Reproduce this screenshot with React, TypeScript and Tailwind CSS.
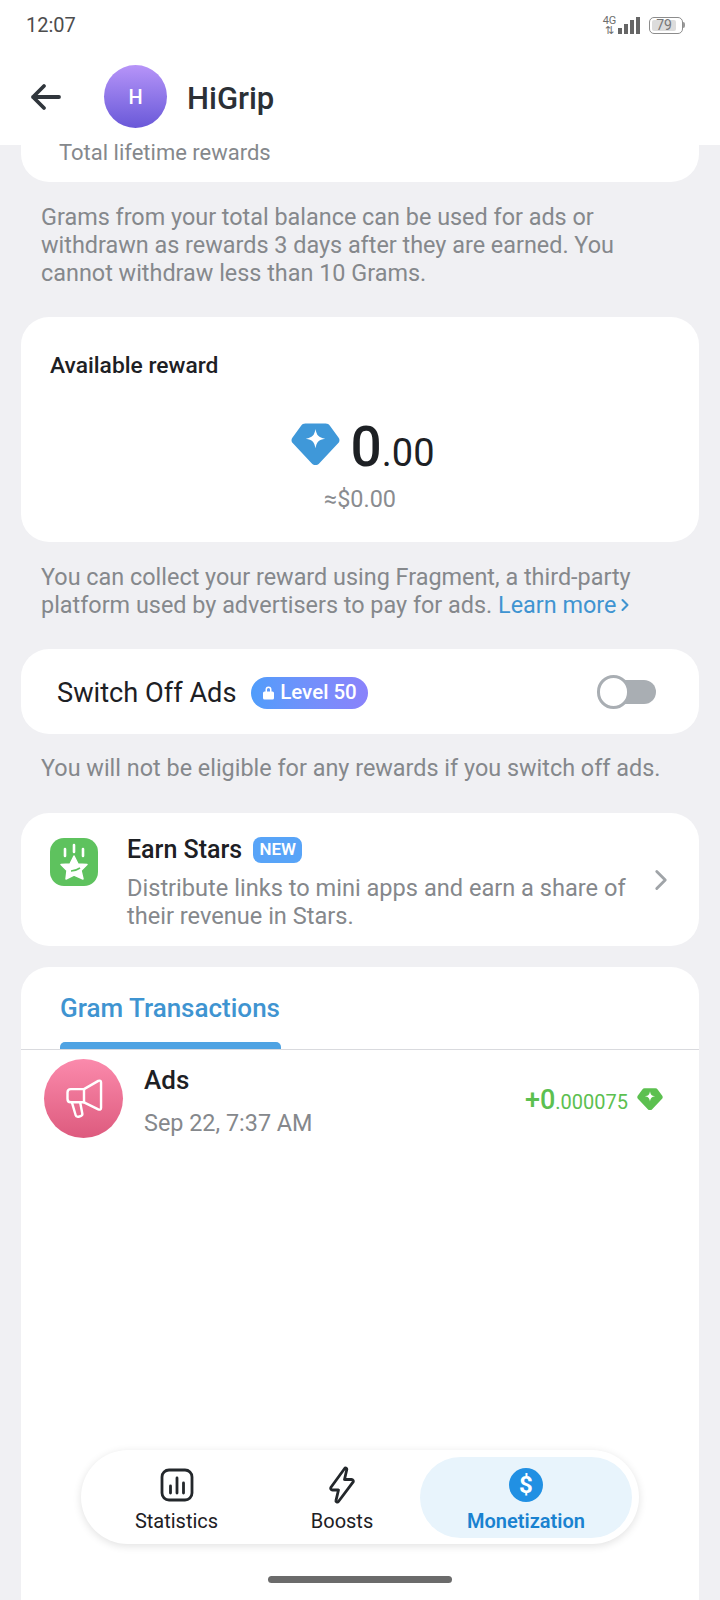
import { ChevronRight } from "lucide-react";

function Gem({ color, size }: { color: string; size: number }) {
  return (
    <svg width={size} height={size * 0.87} viewBox="0 0 48 42" className="shrink-0">
      <path
        d="M14 0.500H34C35.800 0.500 37.200 1.200 38.200 2.600L46.800 14.500C48 16.200 47.900 18.300 46.500 19.800L27.600 40C25.600 42 22.400 42 20.400 40L1.500 19.800C0.100 18.300 0 16.200 1.200 14.500L9.800 2.600C10.800 1.200 12.200 0.500 14 0.500Z"
        fill={color}
      />
      <path d="M24 6C25.200 12.500 27 14.300 33.500 15.500C27 16.700 25.200 18.500 24 25C22.800 18.500 21 16.700 14.500 15.500C21 14.300 22.800 12.500 24 6Z" fill="#fff" />
    </svg>
  );
}

function SignalIcons() {
  return (
    <div className="flex items-center">
      <div className="flex flex-col items-center w-[13px] text-[#6e6e6e] leading-none">
        <span className="text-[11px] leading-[10px]">4G</span>
        <span className="text-[11px] leading-[9px]">⇅</span>
      </div>
      <div className="flex items-end gap-[2px] h-[17px] ml-[2px]">
        <span className="w-[4px] h-[6px] bg-[#666]" />
        <span className="w-[4px] h-[10px] bg-[#666]" />
        <span className="w-[4px] h-[14px] bg-[#666]" />
        <span className="w-[4px] h-[17px] bg-[#666]" />
      </div>
      <div className="flex items-center ml-[9px]">
        <div className="w-[34px] h-[17px] border border-[#8c8c8c] rounded-[5px] p-[2px] flex">
          <div className="w-[24px] bg-[#dcdcdc] rounded-[2px] flex items-center justify-center text-[14px] leading-none text-[#777]">
            79
          </div>
        </div>
        <span className="w-[2px] h-[6px] bg-[#999] rounded-r-sm" />
      </div>
    </div>
  );
}

function Stars() {
  return (
    <div className="w-[48px] h-[48px] rounded-[14px] bg-[#5ec25e] flex items-center justify-center shrink-0">
      <svg width="36" height="40" viewBox="0 0 36 40">
        <path d="M18 3V10M9 7V14M27 7V14" stroke="#fff" strokeWidth="2.600" strokeLinecap="round" fill="none" />
        <path d="M18 14L22 22L31 22.500L25 28.500L27 37L18 33L10 37L11 28.500L5 22.500L14 22Z" fill="#fff" stroke="#fff" strokeWidth="1.500" strokeLinejoin="round" />
        <path d="M15 29C18 29 21 28 24 26" stroke="#5ec25e" strokeWidth="1.600" fill="none" />
      </svg>
    </div>
  );
}

export default function App() {
  return (
    <div className="relative w-[720px] h-[1600px] overflow-hidden bg-[#f0f0f3] font-['Roboto',sans-serif] flex flex-col">
      {/* header */}
      <div className="bg-white h-[145px] shrink-0">
        <div className="h-[50px] flex items-center justify-between pl-[26px] pr-[35px]">
          <span className="text-[20px] text-[#4d4d4d]">12:07</span>
          <SignalIcons />
        </div>
        <div className="flex items-center pl-[30px] mt-[15px]">
          <svg width="31" height="28" viewBox="0 0 31 28" fill="none" stroke="#30363c" strokeWidth="3.800" strokeLinecap="round" strokeLinejoin="round">
            <path d="M29 14H3M14 3L3 14L14 25" />
          </svg>
          <div className="w-[63px] h-[63px] rounded-full bg-gradient-to-b from-[#b794f8] to-[#6a58d8] ml-[43px] flex items-center justify-center text-white text-[20px] font-medium">
            H
          </div>
          <span className="ml-[20px] mt-[3px] text-[31px] font-medium text-[#2b3036] leading-none">HiGrip</span>
        </div>
      </div>

      <div className="px-[21px] flex flex-col">
        <div className="bg-white rounded-b-[28px] h-[37px] pl-[38px]">
          <span className="text-[22px] leading-[16px] block text-[#85888c]">Total lifetime rewards</span>
        </div>

        <p className="px-[20px] mt-[21px] text-[23.400px] leading-[28px] text-[#85888c]">
          Grams from your total balance can be used for ads or withdrawn as rewards 3 days after they are earned. You cannot withdraw less than 10 Grams.
        </p>

        {/* available reward */}
        <div className="bg-white rounded-[28px] h-[225px] mt-[30px] pt-[35px] flex flex-col">
          <span className="pl-[29px] text-[22.800px] leading-[28px] font-medium text-[#1d2024]">Available reward</span>
          <div className="flex justify-center items-start mt-[42px] ml-[5px]">
            <div className="mt-[1px]">
              <Gem color="#3f98d9" size={49} />
            </div>
            <div className="ml-[11px] flex items-baseline leading-[56px] text-[#1d2024] -mt-[3px]">
              <span className="text-[55px] font-medium">0</span>
              <span className="text-[38px]">.00</span>
            </div>
          </div>
          <span className="text-center text-[23.400px] leading-[28px] text-[#8a8c90] mt-[4px]">≈$0.00</span>
        </div>

        <p className="px-[20px] mt-[21px] text-[23.400px] leading-[28px] text-[#85888c]">
          You can collect your reward using Fragment, a third-party platform used by advertisers to pay for ads.{" "}
          <span className="text-[#3f94d1]">
            Learn more
            <ChevronRight size={20} strokeWidth={2.500} className="inline -mt-[3px] -ml-[1px]" />
          </span>
        </p>

        {/* switch off ads */}
        <div className="bg-white rounded-[28px] h-[85px] mt-[30px] pl-[36px] flex items-center">
          <span className="text-[27.200px] text-[#1d2024] leading-none mt-[4px]">Switch Off Ads</span>
          <span className="ml-[15px] mt-[2px] h-[32px] w-[117px] rounded-full bg-gradient-to-r from-[#4f9dfb] to-[#8a82fb] text-white text-[20.500px] font-medium flex items-center justify-center gap-[6px]">
            <svg width="11" height="15" viewBox="0 0 11 14" fill="#fff">
              <path d="M2.500 6V4A3 3 0 0 1 8.500 4V6H9.500A1.500 1.500 0 0 1 11 7.500V12.500A1.500 1.500 0 0 1 9.500 14H1.500A1.500 1.500 0 0 1 0 12.500V7.500A1.500 1.500 0 0 1 1.500 6ZM4 6H7V4A1.500 1.500 0 0 0 4 4Z" />
            </svg>
            Level 50
          </span>
          <div className="ml-auto mr-[43px] w-[58px] h-[24px] rounded-full bg-[#a9aeb3] relative">
            <span className="absolute -left-[1px] -top-[5px] w-[33px] h-[34px] rounded-full bg-white border-[3px] border-[#a9aeb3]" />
          </div>
        </div>

        <p className="px-[20px] mt-[20px] text-[23.400px] leading-[28px] text-[#85888c] whitespace-nowrap">
          You will not be eligible for any rewards if you switch off ads.
        </p>

        {/* earn stars */}
        <div className="bg-white rounded-[28px] h-[133px] mt-[31px] pl-[29px] pr-[31px] flex items-center">
          <div className="self-start mt-[25px]">
            <Stars />
          </div>
          <div className="ml-[29px] mt-[7px] flex-1 min-w-0">
            <div className="flex items-center">
              <span className="text-[25px] leading-[28px] font-medium text-[#1d2024]">Earn Stars</span>
              <span className="ml-[11px] w-[49px] h-[26px] rounded-[8px] bg-[#58a4f8] text-white text-[17px] font-semibold flex items-center justify-center">
                NEW
              </span>
            </div>
            <p className="mt-[10px] text-[23.600px] leading-[28px] text-[#85888c]">
              Distribute links to mini apps and earn a share of their revenue in Stars.
            </p>
          </div>
          <ChevronRight size={34} strokeWidth={2} className="text-[#a0a4a8] -ml-[8px] -mr-[10px] shrink-0" />
        </div>

        {/* transactions */}
        <div className="bg-white rounded-t-[28px] h-[700px] mt-[21px]">
          <div className="h-[83px] border-b border-[#d9dade] pl-[39px] flex flex-col">
            <span className="mt-[26px] text-[26px] leading-[30px] font-medium text-[#3f94d1]">Gram Transactions</span>
            <span className="mt-auto w-[221px] h-[7px] rounded-t-[5px] bg-[#4fa3e3]" />
          </div>
          <div className="flex pl-[23px] pr-[36px] pt-[9px]">
            <div className="w-[79px] h-[79px] rounded-full bg-gradient-to-b from-[#fb8aac] to-[#dd5a7e] flex items-center justify-center shrink-0">
              <svg width="44" height="44" viewBox="0 0 40 40" fill="none" stroke="#fff" strokeWidth="2.200" strokeLinejoin="round" strokeLinecap="round">
                <path d="M5 14C5 12 6.500 11 8 11H20L33 3.500C34.500 3 35.500 3.500 35.500 5V28C35.500 29.500 34.500 30 33 29.500L20 23H8C6.500 23 5 22 5 20Z" />
                <path d="M20 11V23M9 23L12.500 35C13 37 19 36 18.500 33.500L16.500 23" />
              </svg>
            </div>
            <div className="ml-[21px] flex-1">
              <div className="text-[26px] leading-[30px] font-medium text-[#1d2024] mt-[6px]">Ads</div>
              <div className="text-[23.400px] leading-[28px] text-[#85888c] mt-[14px]">Sep 22, 7:37 AM</div>
            </div>
            <div className="flex items-center self-start mt-[26px]">
              <span className="text-[#5cc050] leading-[30px]">
                <span className="text-[27px] font-medium">+0</span>
                <span className="text-[20px]">.000075</span>
              </span>
              <span className="ml-[9px] -mt-[6px]">
                <Gem color="#5cc050" size={26} />
              </span>
            </div>
          </div>
        </div>
      </div>

      {/* bottom tabs, floating over the list */}
      <div className="absolute left-[81px] top-[1450px] w-[558px] h-[94px] rounded-full bg-white shadow-[0_2px_8px_rgba(0,0,0,0.12)] flex items-center pr-[7px] text-[#1d2024]">
        <div className="w-[191px] mt-[7px] flex flex-col items-center">
          <svg width="34" height="34" viewBox="0 0 34 34" fill="none" stroke="#23272b" strokeWidth="2.800" strokeLinecap="round">
            <rect x="2" y="2" width="30" height="30" rx="7" />
            <path d="M10.500 18V25M17 10V25M23.500 15V25" />
          </svg>
          <span className="text-[20px] leading-[24px] mt-[7px]">Statistics</span>
        </div>
        <div className="w-[140px] mt-[4px] flex flex-col items-center">
          <svg width="26" height="38" viewBox="0 0 26 38" fill="none" stroke="#23272b" strokeWidth="2.800" strokeLinejoin="round">
            <path d="M16 2C17 1.500 18 2.500 17.800 3.500L15.500 13.500H22.500C24 13.500 24.800 15 24 16.200L9.500 35.500C8.500 36.800 6.500 36 7 34.300L9.500 24H3.500C2 24 1.200 22.500 2 21.200Z" />
          </svg>
          <span className="text-[20px] leading-[24px] mt-[5px]">Boosts</span>
        </div>
        <div className="w-[212px] ml-auto h-[81px] rounded-full bg-[#e8f4fc] flex flex-col items-center justify-center pt-[6px]">
          <div className="w-[34px] h-[34px] rounded-full bg-[#2190e3] text-white text-[24px] font-bold flex items-center justify-center leading-none">
            $
          </div>
          <span className="text-[20px] leading-[24px] mt-[7px] font-semibold text-[#1a82d0]">Monetization</span>
        </div>
      </div>

      <div className="absolute left-[268px] top-[1576px] w-[184px] h-[7px] rounded-full bg-[#6b6b6b]" />
    </div>
  );
}
